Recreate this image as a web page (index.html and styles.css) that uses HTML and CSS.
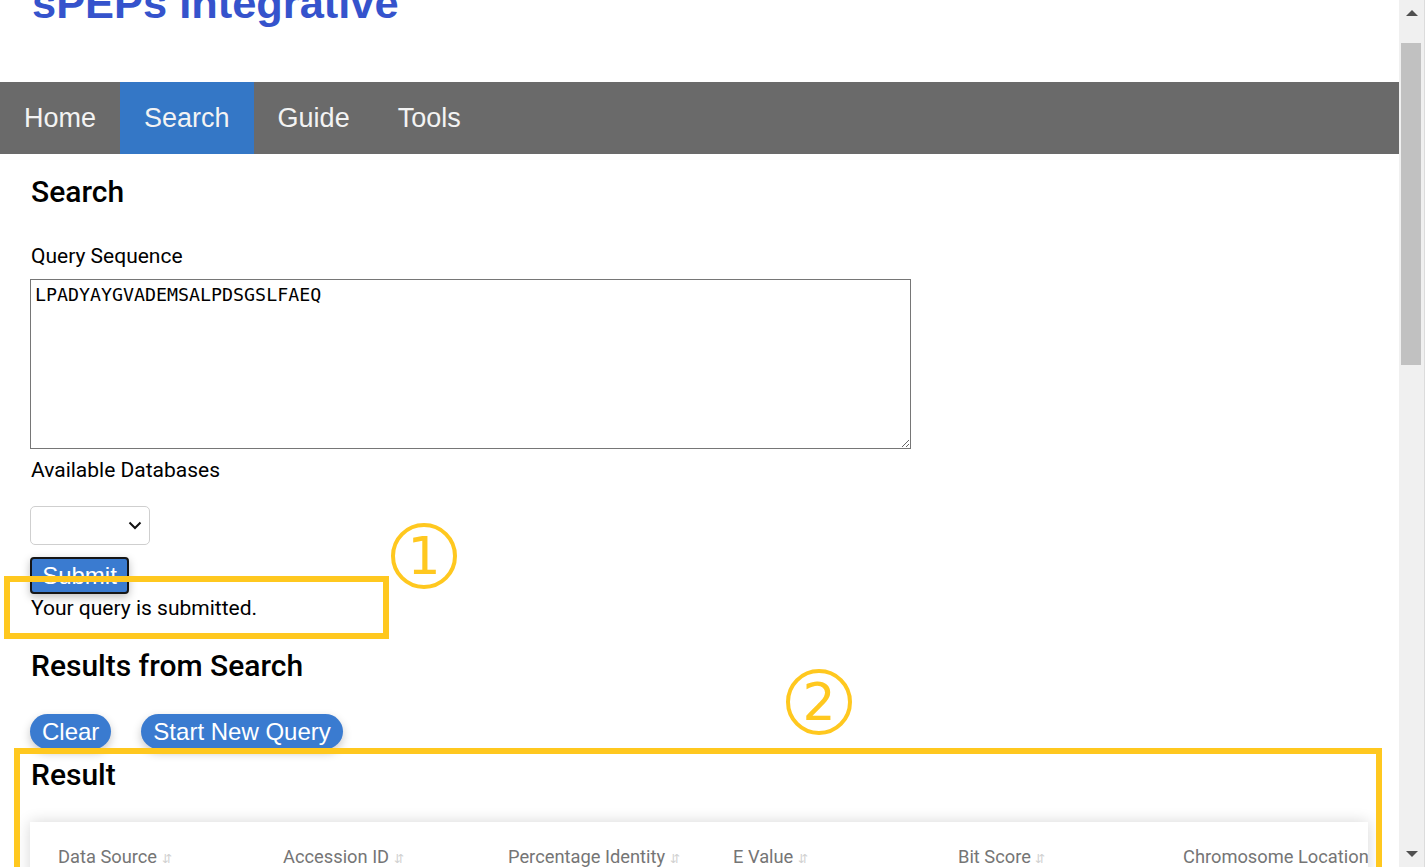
FILE: index.html
```html
<!DOCTYPE html>
<html lang="en">
<head>
<meta charset="utf-8">
<title>sPEPs Integrative - Search</title>
<link rel="stylesheet" href="styles.css">
</head>
<body>
<div class="window">
  <div class="page">
    <header class="site-header">
      <h1 class="site-title">sPEPs Integrative</h1>
    </header>
    <nav class="topnav">
      <a class="nav-item" href="#">Home</a>
      <a class="nav-item active" href="#">Search</a>
      <a class="nav-item" href="#">Guide</a>
      <a class="nav-item" href="#">Tools</a>
    </nav>
    <main class="content">
      <h2 class="heading heading-search">Search</h2>
      <label class="field-label label-query" for="seq">Query Sequence</label>
      <textarea id="seq" class="seq-input">LPADYAYGVADEMSALPDSGSLFAEQ</textarea>
      <label class="field-label label-db" for="db">Available Databases</label>
      <div class="select-box" id="db">
        <svg class="chev" width="14" height="9" viewBox="0 0 14 9"><path d="M1.5 1.5 L7 7 L12.5 1.5" fill="none" stroke="#111" stroke-width="2"/></svg>
      </div>
      <button class="btn-submit">Submit</button>
      <p class="status">Your query is submitted.</p>
      <h2 class="heading heading-results">Results from Search</h2>
      <div class="actions">
        <button class="btn-pill">Clear</button>
        <button class="btn-pill">Start New Query</button>
      </div>
      <h2 class="heading heading-result">Result</h2>
      <div class="table-card">
        <div class="thead">
          <div class="th">Data Source <span class="sort">&#8693;</span></div>
          <div class="th">Accession ID <span class="sort">&#8693;</span></div>
          <div class="th">Percentage Identity <span class="sort">&#8693;</span></div>
          <div class="th">E Value <span class="sort">&#8693;</span></div>
          <div class="th">Bit Score <span class="sort">&#8693;</span></div>
          <div class="th">Chromosome Location <span class="sort">&#8693;</span></div>
        </div>
      </div>
    </main>

    <div class="mark box-one"></div>
    <div class="mark box-two"></div>
    <div class="circled circled-one">1</div>
    <div class="circled circled-two">2</div>
  </div>
  <div class="scrollbar">
    <div class="sb-btn"><span class="tri tri-up"></span></div>
    <div class="sb-track"><div class="sb-thumb"></div></div>
    <div class="sb-btn"><span class="tri tri-down"></span></div>
  </div>
</div>
</body>
</html>
```
FILE: styles.css
```css
html, body {
  margin: 0;
  padding: 0;
  height: 867px;
  overflow: hidden;
  background: #ffffff;
}

.window {
  display: flex;
  height: 867px;
}

.page {
  flex: 1;
  position: relative;
  overflow: hidden;
  font-family: Roboto, "Liberation Sans", sans-serif;
  color: #000;
}

/* header */
.site-header {
  height: 82px;
  overflow: hidden;
}
.site-title {
  margin: -22px 0 0 0;
  padding-left: 32px;
  font-family: "Liberation Sans", Arial, sans-serif;
  font-weight: bold;
  font-size: 43.4px;
  line-height: 50px;
  color: #3553cc;
}

/* nav */
.topnav {
  display: flex;
  height: 72px;
  background: #6a6a6a;
}
.nav-item {
  display: block;
  padding: 0 24px;
  line-height: 72px;
  font-family: "Liberation Sans", Arial, sans-serif;
  font-size: 27px;
  color: #f3f3f3;
  text-decoration: none;
}
.nav-item.active {
  background: #3477c6;
}

/* content */
.content {
  padding: 0 31px;
  display: flex;
  flex-direction: column;
  align-items: flex-start;
}
.heading {
  margin: 0;
  font-weight: 500;
  font-size: 30px;
  line-height: 34px;
}
.heading-search { margin-top: 21px; }
.heading-results { margin-top: 29px; }
.heading-result { margin-top: 9px; }

.field-label {
  display: block;
  font-size: 21px;
  line-height: 24px;
}
.label-query { margin-top: 35px; }
.label-db { margin-top: 9px; }

.seq-input {
  box-sizing: border-box;
  margin: 11px 0 0 -1px;
  width: 881px;
  height: 170px;
  border: 1px solid #767676;
  padding: 4px 4px;
  font-family: "DejaVu Sans Mono", monospace;
  font-size: 18.3px;
  line-height: 22px;
  color: #000;
  resize: both;
}

.select-box {
  box-sizing: border-box;
  margin: 24px 0 0 -1px;
  width: 120px;
  height: 39px;
  border: 1px solid #cfcfcf;
  border-radius: 5px;
  display: flex;
  align-items: center;
  justify-content: flex-end;
  padding-right: 7px;
}

.btn-submit {
  box-sizing: border-box;
  margin: 12px 0 0 -1px;
  width: 99px;
  height: 37px;
  padding: 0;
  border: 2px solid #161616;
  border-radius: 4px;
  background: #3a7bd0;
  color: #fff;
  font-family: "Liberation Sans", Arial, sans-serif;
  font-size: 24px;
  line-height: 30px;
  box-shadow: 0 3px 8px rgba(0,0,0,0.25);
}

.status {
  margin: 2px 0 0 0;
  font-size: 21px;
  line-height: 24px;
}

.actions {
  display: flex;
  gap: 30px;
  margin: 31px 0 0 -1px;
}
.btn-pill {
  height: 35px;
  padding: 0 12px;
  border: none;
  border-radius: 18px;
  background: #3a7bd0;
  color: #fff;
  font-family: "Liberation Sans", Arial, sans-serif;
  font-size: 24px;
  line-height: 35px;
  box-shadow: 0 4px 10px rgba(0,0,0,0.22);
}

.table-card {
  align-self: stretch;
  margin: 30px 0 0 -1px;
  width: 1338px;
  background: #fff;
  box-shadow: 0 0 14px rgba(0,0,0,0.16);
  padding: 24px 0 40px 28px;
  overflow: hidden;
  box-sizing: border-box;
}
.thead {
  display: grid;
  grid-template-columns: repeat(6, 225px);
  white-space: nowrap;
}
.th {
  font-size: 18.3px;
  line-height: 22px;
  color: #757575;
}
.sort {
  color: #cfcfcf;
  font-size: 12px;
}

/* annotations */
.mark {
  position: absolute;
  border: 6px solid #ffc81f;
  box-sizing: border-box;
}
.box-one {
  left: 4px;
  top: 576px;
  width: 385px;
  height: 63px;
}
.box-two {
  left: 14px;
  top: 748px;
  width: 1368px;
  height: 125px;
}
.circled {
  position: absolute;
  box-sizing: border-box;
  width: 66px;
  height: 66px;
  border: 4px solid #ffc81f;
  border-radius: 50%;
  color: #ffc81f;
  font-family: "DejaVu Sans", sans-serif;
  font-size: 52px;
  line-height: 58px;
  text-align: center;
}
.circled-one { left: 391px; top: 523px; }
.circled-two { left: 786px; top: 669px; }

/* scrollbar */
.scrollbar {
  width: 26px;
  flex: none;
  background: #f0f0f0;
  border-right: 1px solid #dcdcdc;
  box-sizing: border-box;
  display: flex;
  flex-direction: column;
}
.sb-btn {
  height: 26px;
  display: flex;
  align-items: center;
  justify-content: center;
}
.sb-track {
  flex: 1;
}
.sb-thumb {
  margin: 17px 3px 0 2px;
  height: 322px;
  background: #c1c1c1;
}
.tri {
  width: 0;
  height: 0;
  border-left: 6px solid transparent;
  border-right: 6px solid transparent;
}
.tri-up { border-bottom: 6px solid #505050; }
.tri-down { border-top: 6px solid #505050; }
```
